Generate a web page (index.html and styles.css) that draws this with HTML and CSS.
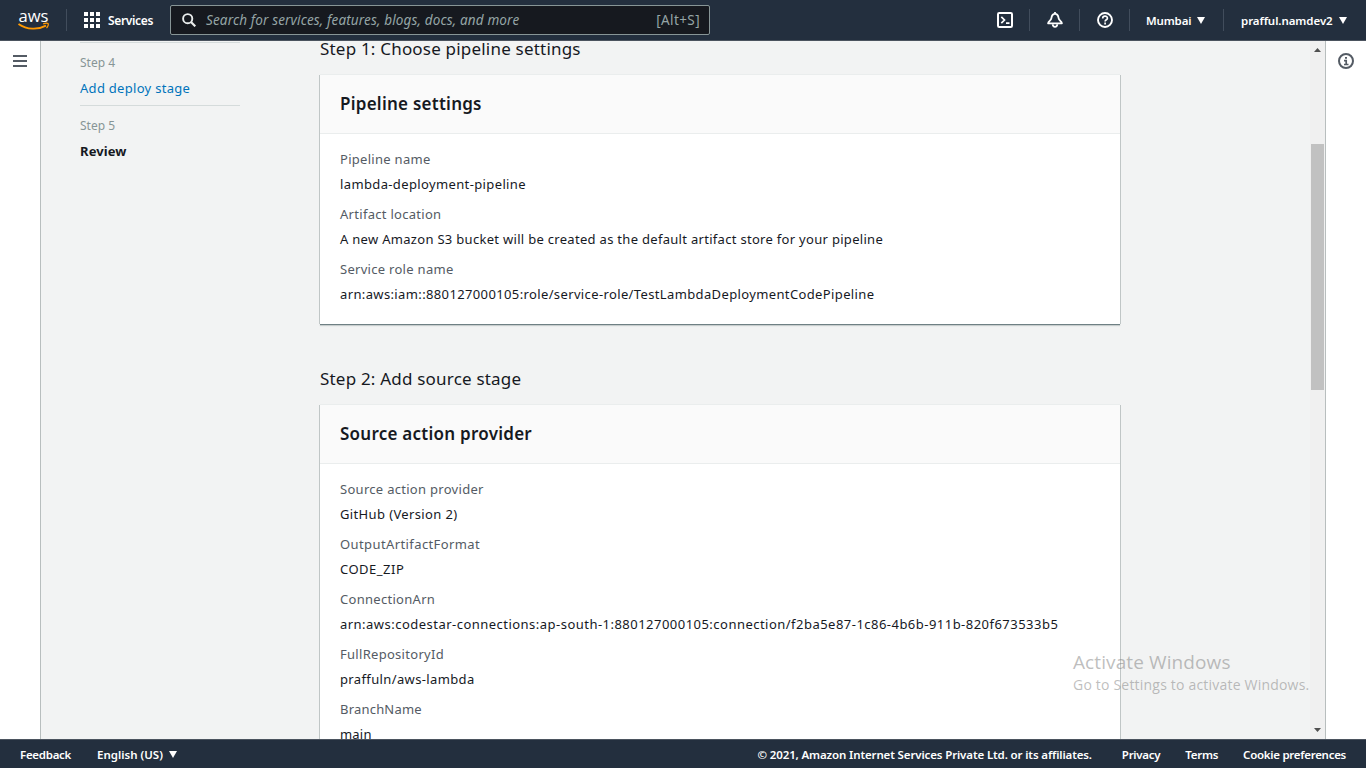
FILE: index.html
```html
<!DOCTYPE html>
<html lang="en">
<head>
<meta charset="utf-8">
<title>Create new pipeline</title>
<link rel="stylesheet" href="styles.css">
</head>
<body>
<header class="topbar">
  <svg class="logo" width="32" height="22" viewBox="0 0 32 22"><text class="logo-text" x="0.500" y="12.600" textLength="30" lengthAdjust="spacingAndGlyphs">aws</text><path d="M0.500 14.900C9 20.800 20 21 28 16.600" fill="none" stroke="#f90" stroke-width="1.800"/><path d="M25.200 14.900c2-.9 4.200-.9 4.900-.3.600.700-.2 3.200-1.600 4.500" fill="none" stroke="#f90" stroke-width="1.300"/></svg>
  <i class="rule rule-logo"></i>
  <a class="services"><svg width="16" height="16" viewBox="0 0 16 16" fill="#fff"><path d="M0 0h4v4H0zM6 0h4v4H6zM12 0h4v4h-4zM0 6h4v4H0zM6 6h4v4H6zM12 6h4v4h-4zM0 12h4v4H0zM6 12h4v4H6zM12 12h4v4h-4z"/></svg><span class="services-label">Services</span></a>
  <div class="search"><svg width="14" height="14" viewBox="0 0 14 14" fill="none" stroke="#eaeded" stroke-width="1.900"><circle cx="5.700" cy="5.700" r="4.600"/><path d="M9 9l4.300 4.300" stroke-width="2.200"/></svg><span class="search-hint">Search for services, features, blogs, docs, and more</span><kbd class="shortcut">[Alt+S]</kbd></div>
  <nav class="tools">
    <a class="tool"><svg width="16" height="16" viewBox="0 0 16 16" fill="none" stroke="#fff" stroke-width="2"><rect x="1" y="1" width="14" height="14" rx="1.200"/><path d="M4.300 4.800L7.500 8l-3.200 3.200M9 11.200h3.500" stroke-width="1.700"/></svg></a>
    <i class="rule"></i>
    <a class="tool"><svg width="16" height="16" viewBox="0 0 16 16" fill="none" stroke="#fff" stroke-width="1.800" stroke-linejoin="round"><path d="M8 0v2M8 1.900C5.400 1.900 4.700 3.800 4.400 6.200 4.200 8.400 1.300 9.300 1.100 11.300H14.900C14.700 9.300 11.800 8.400 11.600 6.200 11.300 3.800 10.600 1.900 8 1.900z"/><path d="M5.700 12.300c.2 3.400 4.400 3.400 4.600 0"/></svg></a>
    <i class="rule"></i>
    <a class="tool"><svg width="16" height="16" viewBox="0 0 16 16" fill="none" stroke="#fff" stroke-width="1.900"><circle cx="8" cy="8" r="7"/><path d="M5.700 6.400c0-3 4.700-2.900 4.700-.2 0 1.600-2.300 1.600-2.300 3.400M8.100 10.600v1.900" stroke-width="1.700"/></svg></a>
    <i class="rule"></i>
    <a class="menu region"><span>Mumbai</span><svg class="caret" width="8" height="7" viewBox="0 0 8 7"><path d="M0 0h8L4 7z" fill="#fff"/></svg></a>
    <i class="rule"></i>
    <a class="menu account"><span>prafful.namdev2</span><svg class="caret" width="8" height="7" viewBox="0 0 8 7"><path d="M0 0h8L4 7z" fill="#fff"/></svg></a>
  </nav>
</header>
<div class="workspace">
  <aside class="rail rail-left"><svg width="14" height="12" viewBox="0 0 14 12"><path d="M0 1h14M0 6h14M0 11h14" stroke="#545b64" stroke-width="2"/></svg></aside>
  <main class="page">
    <nav class="steps">
      <div class="step"><small class="step-number">Step 4</small><a class="step-link">Add deploy stage</a></div>
      <div class="step"><small class="step-number">Step 5</small><b class="step-current">Review</b></div>
    </nav>
    <div class="content">
      <h2 class="stage-title stage-one">Step 1: Choose pipeline settings</h2>
      <section class="card card-one">
        <h3 class="card-title">Pipeline settings</h3>
        <dl class="details">
          <dt>Pipeline name</dt><dd>lambda-deployment-pipeline</dd>
          <dt>Artifact location</dt><dd class="sentence">A new Amazon S3 bucket will be created as the default artifact store for your pipeline</dd>
          <dt>Service role name</dt><dd>arn:aws:iam::880127000105:role/service-role/TestLambdaDeploymentCodePipeline</dd>
        </dl>
      </section>
      <h2 class="stage-title stage-two">Step 2: Add source stage</h2>
      <section class="card">
        <h3 class="card-title">Source action provider</h3>
        <dl class="details">
          <dt>Source action provider</dt><dd>GitHub (Version 2)</dd>
          <dt class="format">OutputArtifactFormat</dt><dd class="format-value">CODE_ZIP</dd>
          <dt>ConnectionArn</dt><dd class="connection">arn:aws:codestar-connections:ap-south-1:880127000105:connection/f2ba5e87-1c86-4b6b-911b-820f673533b5</dd>
          <dt>FullRepositoryId</dt><dd>praffuln/aws-lambda</dd>
          <dt class="branch">BranchName</dt><dd class="branch">main</dd>
        </dl>
      </section>
    </div>
    <div class="scrollbar">
      <svg width="7" height="4" viewBox="0 0 7 4"><path d="M0 4h7L3.500 0z" fill="#505050"/></svg>
      <div class="track"><div class="thumb"></div></div>
      <svg width="7" height="4" viewBox="0 0 7 4"><path d="M0 0h7L3.500 4z" fill="#505050"/></svg>
    </div>
  </main>
  <aside class="rail rail-right"><svg width="16" height="16" viewBox="0 0 16 16" fill="none" stroke="#545b64" stroke-width="2"><circle cx="8" cy="8" r="7"/><path d="M7 4.800h2M6 7.700h2.200v4M6 11.500h4.500" stroke-width="1.700"/></svg></aside>
</div>
<footer class="footer">
  <a class="feedback">Feedback</a>
  <a class="menu language"><span>English (US)</span><svg class="caret" width="8" height="7" viewBox="0 0 8 7"><path d="M0 0h8L4 7z" fill="#fff"/></svg></a>
  <span class="copyright">© 2021, Amazon Internet Services Private Ltd. or its affiliates.</span>
  <a class="privacy">Privacy</a>
  <a class="terms">Terms</a>
  <a class="cookies">Cookie preferences</a>
</footer>
<div class="activation"><div class="activation-title">Activate Windows</div><div class="activation-text">Go to Settings to activate Windows.</div></div>
</body>
</html>
```
FILE: styles.css
```css
* { box-sizing: border-box; }
body { margin: 0; height: 768px; overflow: hidden; display: flex; flex-direction: column; font-family: "Noto Sans", "Open Sans", sans-serif; font-size: 13px; color: #16191f; }
svg { display: block; flex: none; }
span, a, small, b, kbd { white-space: nowrap; }

.topbar { flex: 0 0 41px; display: flex; align-items: center; background: #232f3e; border-bottom: 1px solid #4b535e; color: #fff; font-size: 12px; font-weight: 600; }
.logo { margin-left: 18px; overflow: visible; }
.logo-text { font: 500 16px "Open Sans", sans-serif; fill: #fff; }
.rule { width: 1px; height: 22px; background: #414d5c; flex: none; }
.rule-logo { margin: 0 17px 0 16px; }
.services { display: flex; align-items: center; gap: 8px; width: 86px; }
.services-label { letter-spacing: -0.35px; }
.search { display: flex; align-items: center; width: 540px; height: 30px; padding: 0 9px 0 11px; border: 1px solid #879596; border-radius: 2px; background: #16191f; color: #95a5a6; font-size: 13.5px; font-weight: 400; }
.search-hint { margin-left: 10px; font-style: italic; letter-spacing: 0.15px; }
.shortcut { margin-left: auto; font: inherit; letter-spacing: 0.4px; }
.tools { margin-left: auto; display: flex; align-items: center; font-size: 11.5px; }
.tool { width: 49px; display: flex; justify-content: center; }
.menu { display: flex; align-items: center; gap: 6px; }
.region { width: 93px; padding-left: 16px; letter-spacing: -0.15px; }
.account { width: 142px; padding-left: 17px; letter-spacing: -0.07px; }

.workspace { flex: 0 0 698px; display: flex; background: #fff; overflow: hidden; }
.rail { display: flex; justify-content: center; align-items: flex-start; }
.rail-left { width: 41px; padding-top: 14px; border-right: 1px solid #b8bebe; }
.rail-right { width: 41px; padding-top: 12px; border-left: 1px solid #b8bebe; }
.page { width: 1284px; display: flex; background: #f2f3f3; }
.steps { width: 160px; margin: 1px 80px 0 39px; }
.step { display: flex; flex-direction: column; border-top: 1px solid #d5dbdb; height: 63px; padding-top: 9px; }
.step-number { font-size: 12px; line-height: 22px; color: #879596; }
.step-link, .step-current { line-height: 28px; font-size: 13px; }
.step-link { color: #0073bb; letter-spacing: 0.29px; }
.step-current { font-weight: 700; letter-spacing: 0.1px; }
.content { width: 800px; margin-right: auto; }
.stage-title { font-size: 17px; font-weight: 400; line-height: 26px; margin: 0 0 13px; white-space: nowrap; letter-spacing: 0.2px; }
.stage-one { margin-top: -5px; }
.stage-two { margin-top: 42px; }
.card { background: #fff; box-shadow: 0 -1px 0 #eaeded, -1px 0 0 #c0c6c6, 1px 0 0 #c0c6c6, 0 1px 0 #6f8084, 0 2px 1px #c8cece; }
.card-one { height: 249px; }
.card-title { margin: 0; height: 59px; padding: 0 20px; line-height: 58px; font-size: 17px; font-weight: 600; letter-spacing: 0.25px; background: #fafafa; border-bottom: 1px solid #eaeded; }
.details { margin: 0; padding: 13px 20px; font-size: 13px; line-height: 25px; white-space: nowrap; }
.details dt { color: #545b64; letter-spacing: 0.29px; }
.details dd { margin: 0 0 5px; letter-spacing: 0.37px; }
.details .sentence { letter-spacing: 0.3px; }
.details .format { letter-spacing: 0.4px; }
.details .format-value { letter-spacing: 0.5px; }
.details .connection { letter-spacing: 0.475px; }
.details .branch { letter-spacing: 0.2px; }
.scrollbar { width: 15px; display: flex; flex-direction: column; align-items: center; padding: 7px 1px 7px 0; background: #f0f0f0; }
.track { flex: 1; width: 13px; padding-top: 92px; }
.thumb { height: 246px; background: #c1c1c1; }

.footer { flex: 0 0 29px; display: flex; align-items: center; padding: 0 20px; background: #232f3e; border-top: 1px solid #4b535e; color: #fff; font-size: 11.5px; font-weight: 600; letter-spacing: -0.28px; }
.language { margin-left: 26px; letter-spacing: 0; }
.copyright { margin-left: auto; letter-spacing: -0.13px; }
.privacy { margin-left: 30px; }
.terms { margin-left: 25px; }
.cookies { margin-left: 25px; }

.activation { position: absolute; left: 1073px; top: 650px; color: rgba(125, 125, 125, 0.5); font-family: "Open Sans", sans-serif; white-space: nowrap; }
.activation-title { font-size: 19px; line-height: 24px; letter-spacing: 0.1px; }
.activation-text { font-size: 14px; line-height: 21px; letter-spacing: 0.2px; }
```
